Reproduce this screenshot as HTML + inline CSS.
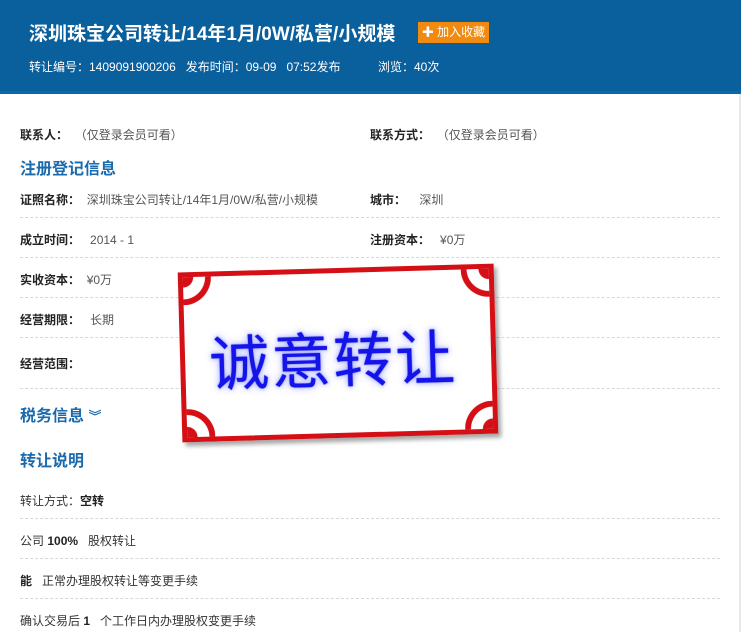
<!DOCTYPE html>
<html><head><meta charset="utf-8"><style>
body{margin:0;width:741px;height:632px;overflow:hidden;background:#fff;font-family:"Liberation Sans","Noto Sans CJK SC",sans-serif;position:relative}
.hd{position:absolute;left:0;top:0;width:741px;height:91px;background:#0a5f9d;border-bottom:3px solid #0869ab}
.t{position:absolute;left:29px;top:19px;color:#fff;font-size:19px;font-weight:bold;white-space:nowrap}
.btn{position:absolute;left:418px;top:22px;width:71px;height:21px;background:#f08a10;color:#fff;font-size:12px;line-height:21px;text-align:center}
.m{position:absolute;top:58px;color:#fff;font-size:12px;white-space:nowrap}
.a{position:absolute;font-size:12px;color:#333;white-space:nowrap}
.l{font-weight:bold;color:#222}
.v{color:#555}
.h{position:absolute;left:20px;font-size:16px;color:#1a6aad;font-weight:bold;white-space:nowrap}
.d{position:absolute;left:20px;width:700px;border-top:1px dashed #d8d8d8;height:0}
.rb{position:absolute;left:739px;top:94px;width:2px;height:538px;background:#e8e8e8}
.st{position:absolute;left:180px;top:268px;width:306px;height:160px;border:5px solid #d40f15;background:#fff;transform:rotate(-1.6deg);box-shadow:3px 4px 4px rgba(0,0,0,.35)}
.st span{position:absolute;left:24px;top:40px;font-size:60px;font-weight:400;color:#1414e8;letter-spacing:2px;text-shadow:0 0 1px #1414e8,0 0 5px #9aa2ff,0 0 10px #c0c4ff;white-space:nowrap}
.c{position:absolute;width:28px;height:28px;background:radial-gradient(circle at var(--p),transparent 55%,#d40f15 57%,#d40f15 70%,transparent 72%),radial-gradient(circle at var(--p),#d40f15 0 25%,transparent 27%)}
</style></head><body>
<div class="hd">
<div class="t">深圳珠宝公司转让/14年1月/0W/私营/小规模</div>
<div class="btn">✚ 加入收藏</div>
<div class="m" style="left:29px">转让编号：1409091900206&nbsp;&nbsp;&nbsp;发布时间：09-09&nbsp;&nbsp;&nbsp;07:52发布</div>
<div class="m" style="left:378px">浏览：40次</div>
</div>
<div class="rb"></div>
<div class="a" style="left:20px;top:126px"><span class="l">联系人：</span>&nbsp;&nbsp;<span class="v">（仅登录会员可看）</span></div>
<div class="a" style="left:370px;top:126px"><span class="l">联系方式：</span>&nbsp;&nbsp;<span class="v">（仅登录会员可看）</span></div>
<div class="h" style="top:155px">注册登记信息</div>
<div class="a" style="left:20px;top:191px"><span class="l">证照名称：</span>&nbsp;&nbsp;<span class="v">深圳珠宝公司转让/14年1月/0W/私营/小规模</span></div>
<div class="a" style="left:370px;top:191px"><span class="l">城市：</span>&nbsp;&nbsp;&nbsp;&nbsp;<span class="v">深圳</span></div>
<div class="d" style="top:217px"></div>
<div class="a" style="left:20px;top:231px"><span class="l">成立时间：</span>&nbsp;&nbsp;&nbsp;<span class="v">2014 - 1</span></div>
<div class="a" style="left:370px;top:231px"><span class="l">注册资本：</span>&nbsp;&nbsp;&nbsp;<span class="v">¥0万</span></div>
<div class="d" style="top:257px"></div>
<div class="a" style="left:20px;top:271px"><span class="l">实收资本：</span>&nbsp;&nbsp;<span class="v">¥0万</span></div>
<div class="d" style="top:297px"></div>
<div class="a" style="left:20px;top:311px"><span class="l">经营期限：</span>&nbsp;&nbsp;&nbsp;<span class="v">长期</span></div>
<div class="d" style="top:337px"></div>
<div class="a" style="left:20px;top:355px"><span class="l">经营范围：</span></div>
<div class="d" style="top:388px"></div>
<div class="h" style="top:402px">税务信息 <span style="font-size:13px">︾</span></div>
<div class="h" style="top:447px">转让说明</div>
<div class="a" style="left:20px;top:492px">转让方式：<span class="l">空转</span></div>
<div class="d" style="top:518px"></div>
<div class="a" style="left:20px;top:532px">公司 <span class="l">100%</span>&nbsp;&nbsp;&nbsp;股权转让</div>
<div class="d" style="top:558px"></div>
<div class="a" style="left:20px;top:572px"><span class="l">能</span>&nbsp;&nbsp;&nbsp;正常办理股权转让等变更手续</div>
<div class="d" style="top:598px"></div>
<div class="a" style="left:20px;top:612px">确认交易后 <span class="l">1</span>&nbsp;&nbsp;&nbsp;个工作日内办理股权变更手续</div>
<div class="st">
<div class="c" style="left:0;top:0;--p:0 0"></div>
<div class="c" style="right:0;top:0;--p:100% 0"></div>
<div class="c" style="left:0;bottom:0;--p:0 100%"></div>
<div class="c" style="right:0;bottom:0;--p:100% 100%"></div>
<span>诚意转让</span>
</div>
</body></html>
